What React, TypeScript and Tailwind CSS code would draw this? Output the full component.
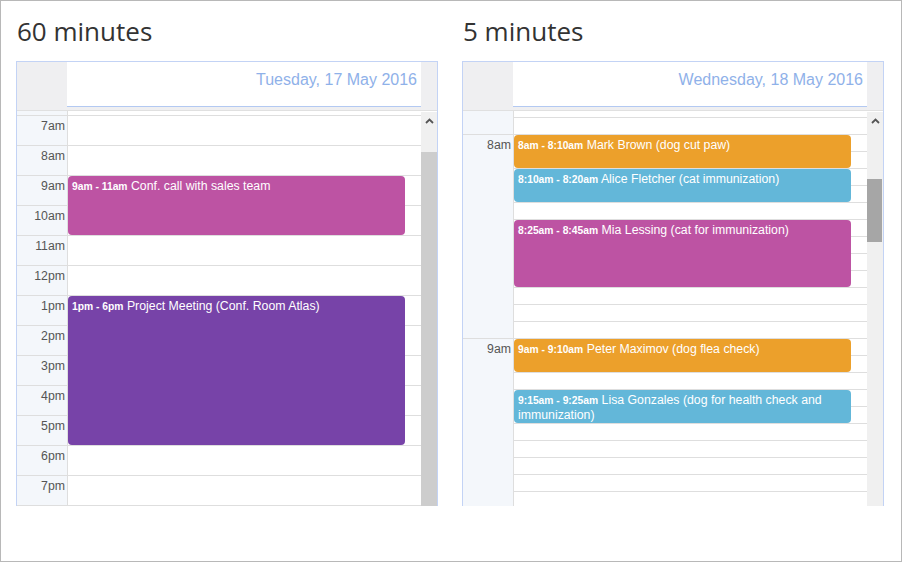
import React from "react";

type Ev = { top: number; h: number; color: string; time: string; title: string };

const Chevron = () => (
  <svg width="9" height="6" viewBox="0 0 9 6" className="block">
    <polyline points="1,5 4.5,1.5 8,5" fill="none" stroke="#555" strokeWidth="1.8" />
  </svg>
);

const EventBox = ({ e }: { e: Ev }) => (
  <div
    className={`absolute left-0 w-[337px] rounded-[4px] px-[4px] pt-[2.5px] text-white leading-[14.5px] text-[12.3px] overflow-hidden ${e.color}`}
    style={{ top: e.top, height: e.h }}
  >
    <span className="font-bold text-[10.3px]">{e.time}</span> {e.title}
  </div>
);

const Header = ({ date }: { date: string }) => (
  <div className="flex h-[48px] bg-[#efeff1]">
    <div className="w-[50px]" />
    <div className="w-[354px]">
      <div className="h-[45px] bg-white border-b border-[#b3c9f2] text-right pr-[4px] pt-[9px] text-[16px] leading-[18px] text-[#8fb1e9]">
        {date}
      </div>
    </div>
    <div className="w-[16px]" />
  </div>
);

const hours = ["7am", "8am", "9am", "10am", "11am", "12pm", "1pm", "2pm", "3pm", "4pm", "5pm", "6pm", "7pm", ""];

const leftEvents: Ev[] = [
  { top: 65, h: 59, color: "bg-[#bd53a3]", time: "9am - 11am", title: "Conf. call with sales team" },
  { top: 185, h: 149, color: "bg-[#7743a8]", time: "1pm - 6pm", title: "Project Meeting (Conf. Room Atlas)" },
];

const rightEvents: Ev[] = [
  { top: 24, h: 33, color: "bg-[#eca02b]", time: "8am - 8:10am", title: "Mark Brown (dog cut paw)" },
  { top: 58, h: 33, color: "bg-[#63b7d9]", time: "8:10am - 8:20am", title: "Alice Fletcher (cat immunization)" },
  { top: 109, h: 67, color: "bg-[#bd53a3]", time: "8:25am - 8:45am", title: "Mia Lessing (cat for immunization)" },
  { top: 228, h: 33, color: "bg-[#eca02b]", time: "9am - 9:10am", title: "Peter Maximov (dog flea check)" },
  { top: 279, h: 33, color: "bg-[#63b7d9]", time: "9:15am - 9:25am", title: "Lisa Gonzales (dog for health check and immunization)" },
];

const Title = ({ text }: { text: string }) => (
  <div
    className="h-[60px] pt-[17px] pl-[1px] text-[26px] leading-[26px] text-[#333333]"
    style={{ fontFamily: '"Open Sans", sans-serif' }}
  >
    {text}
  </div>
);

const LeftCalendar = () => (
  <div className="border-t border-x border-[#c3d3f5]">
    <Header date="Tuesday, 17 May 2016" />
    <div className="flex h-[396px] border-t border-[#e0e0e0] overflow-hidden">
      <div className="w-[51px] bg-[#f4f7fb] border-r border-[#dedede] shrink-0">
        <div className="h-[4px]" />
        {hours.map((h, i) => (
          <div key={i} className="h-[30px] border-t border-[#dedede] text-right pr-[2px] pt-[3px] text-[12.3px] leading-[14px] text-[#555555]">
            {h}
          </div>
        ))}
      </div>
      <div className="w-[353px] relative shrink-0">
        <div className="h-[4px]" />
        {hours.map((_, i) => (
          <div key={i} className="h-[30px] border-t border-[#dedede]" />
        ))}
        {leftEvents.map((e) => (
          <EventBox key={e.time} e={e} />
        ))}
      </div>
      <div className="w-[16px] flex flex-col shrink-0">
        <div className="h-[41px] bg-[#f0f0f0] border-t border-white flex justify-center pt-[6px]">
          <Chevron />
        </div>
        <div className="flex-1 bg-[#cdcdcd]" />
      </div>
    </div>
  </div>
);

const slots = Array.from({ length: 25 }, (_, i) => i);

const RightCalendar = () => (
  <div className="border-t border-x border-[#c3d3f5]">
    <Header date="Wednesday, 18 May 2016" />
    <div className="flex h-[396px] border-t border-[#e0e0e0] overflow-hidden">
      <div className="w-[51px] bg-[#f4f7fb] border-r border-[#dedede] shrink-0">
        <div className="h-[23px]" />
        {["8am", "9am", ""].map((h, i) => (
          <div key={i} className="h-[204px] border-t border-[#dedede] text-right pr-[2px] pt-[3px] text-[12.3px] leading-[14px] text-[#555555]">
            {h}
          </div>
        ))}
      </div>
      <div className="w-[353px] relative shrink-0">
        <div className="h-[6px]" />
        {slots.map((s) => (
          <div key={s} className="h-[17px] border-t border-[#dedede]" />
        ))}
        {rightEvents.map((e) => (
          <EventBox key={e.time} e={e} />
        ))}
      </div>
      <div className="w-[16px] bg-[#f0f0f0] flex flex-col shrink-0 border-t border-white">
        <div className="h-[67px] flex justify-center pt-[6px]">
          <Chevron />
        </div>
        <div className="h-[63px] w-[15px] bg-[#a6a6a6]" />
      </div>
    </div>
  </div>
);

export default function App() {
  return (
    <div
      className="w-[902px] h-[562px] border border-[#b8b8b8] bg-white flex gap-[24px] pl-[15px]"
      style={{ fontFamily: '"Liberation Sans", Arial, sans-serif' }}
    >
      <div className="w-[422px]">
        <Title text="60 minutes" />
        <LeftCalendar />
      </div>
      <div className="w-[422px]">
        <Title text="5 minutes" />
        <RightCalendar />
      </div>
    </div>
  );
}
